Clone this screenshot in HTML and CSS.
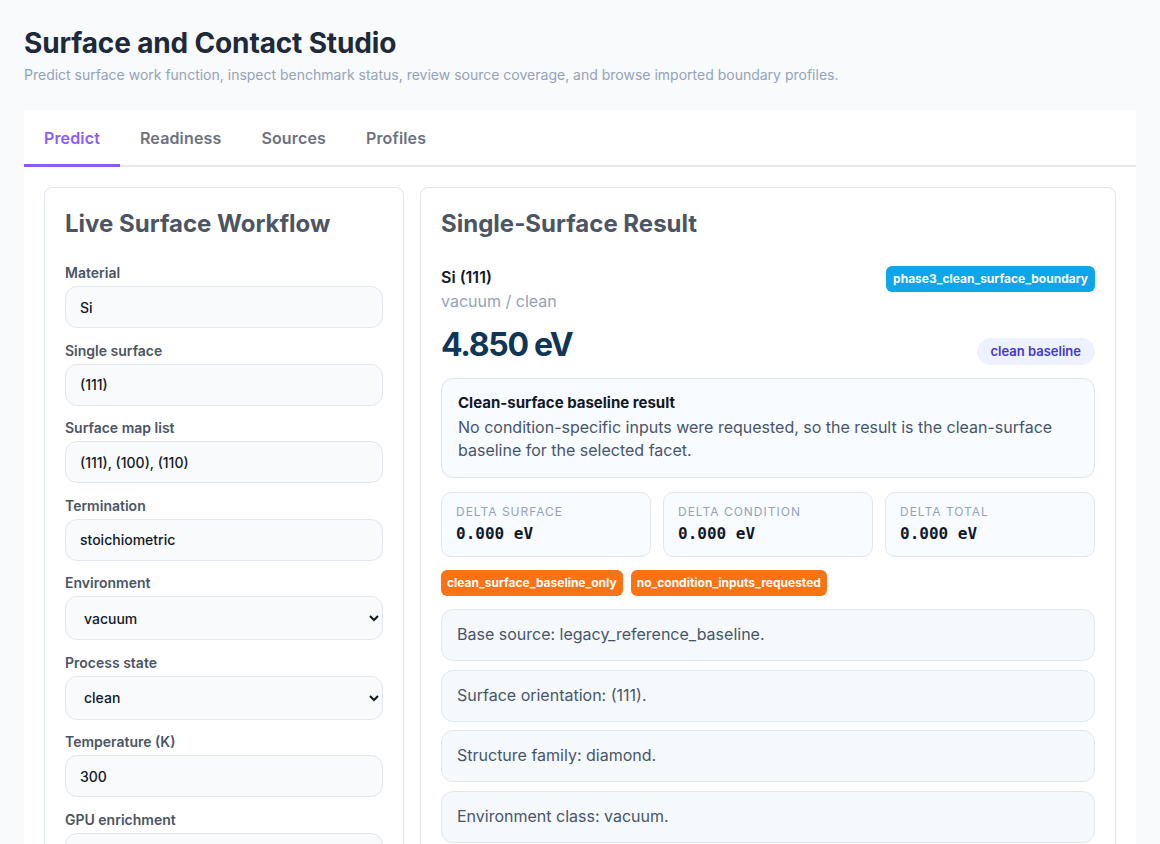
FILE: index.html
```html
<!DOCTYPE html>
<html lang="en">
  <head>
    <meta charset="UTF-8" />
    <meta name="viewport" content="width=device-width, initial-scale=1.0" />
    <title>Surface and Contact Studio</title>
    <link rel="stylesheet" href="styles.css">
  </head>
  <body>
    <header class="page-head">
      <h1>Surface and Contact Studio</h1>
      <p class="lead">Predict surface work function, inspect benchmark status, review source coverage, and browse imported boundary profiles.</p>
    </header>

    <main class="studio">
      <nav class="tabs">
        <button class="tab active">Predict</button>
        <button class="tab">Readiness</button>
        <button class="tab">Sources</button>
        <button class="tab">Profiles</button>
      </nav>

      <section class="panel">
        <form class="card workflow">
          <h2>Live Surface Workflow</h2>
          <div class="fields">
            <div class="field">
              <label for="material">Material</label>
              <input id="material" type="text" value="Si" />
            </div>
            <div class="field">
              <label for="surface">Single surface</label>
              <input id="surface" type="text" value="(111)" />
            </div>
            <div class="field">
              <label for="surface-map">Surface map list</label>
              <input id="surface-map" type="text" value="(111), (100), (110)" />
            </div>
            <div class="field">
              <label for="termination">Termination</label>
              <input id="termination" type="text" value="stoichiometric" />
            </div>
            <div class="field">
              <label for="environment">Environment</label>
              <select id="environment">
                <option selected>vacuum</option>
                <option>air</option>
                <option>oxygen</option>
              </select>
            </div>
            <div class="field">
              <label for="process">Process state</label>
              <select id="process">
                <option selected>clean</option>
                <option>annealed</option>
                <option>oxidized</option>
              </select>
            </div>
            <div class="field">
              <label for="temperature">Temperature (K)</label>
              <input id="temperature" type="text" value="300" />
            </div>
            <div class="field">
              <label for="gpu">GPU enrichment</label>
              <select id="gpu">
                <option selected>off</option>
                <option>on</option>
              </select>
            </div>
          </div>
        </form>

        <div class="card result">
          <h2>Single-Surface Result</h2>

          <div class="result-head">
            <div>
              <div class="facet">Si (111)</div>
              <div class="conditions">vacuum / clean</div>
            </div>
            <span class="badge badge-blue">phase3_clean_surface_boundary</span>
          </div>

          <div class="result-value">
            <div class="value">4.850 eV</div>
            <span class="pill">clean baseline</span>
          </div>

          <div class="notice">
            <strong>Clean-surface baseline result</strong>
            <p>No condition-specific inputs were requested, so the result is the clean-surface baseline for the selected facet.</p>
          </div>

          <div class="deltas">
            <div class="delta">
              <div class="delta-label">Delta surface</div>
              <div class="delta-value">0.000 eV</div>
            </div>
            <div class="delta">
              <div class="delta-label">Delta condition</div>
              <div class="delta-value">0.000 eV</div>
            </div>
            <div class="delta">
              <div class="delta-label">Delta total</div>
              <div class="delta-value">0.000 eV</div>
            </div>
          </div>

          <div class="flags">
            <span class="badge badge-orange">clean_surface_baseline_only</span>
            <span class="badge badge-orange">no_condition_inputs_requested</span>
          </div>

          <ul class="notes">
            <li>Base source: legacy_reference_baseline.</li>
            <li>Surface orientation: (111).</li>
            <li>Structure family: diamond.</li>
            <li>Environment class: vacuum.</li>
            <li>Process state: clean.</li>
          </ul>
        </div>
      </section>
    </main>
  </body>
</html>
```

FILE: styles.css
```css
body {
  margin: 0;
  padding: 26px 24px 0;
  background: #f8fafc;
  font-family: Inter, 'Noto Sans', sans-serif;
  color: #1e293b;
}
.page-head h1 {
  margin: 0;
  font-size: 28px;
  line-height: 34px;
  font-weight: 700;
  letter-spacing: -0.15px;
  color: #1e293b;
}
.lead {
  margin: 5px 0 25px;
  font-size: 14px;
  line-height: 20px;
  color: #94a3b8;
}
.studio {
  background: #fff;
}
.tabs {
  display: flex;
  border-bottom: 2px solid #e5e7eb;
}
.tab {
  padding: 19px 20px 16px;
  margin-bottom: -2px;
  border: none;
  border-bottom: 3px solid transparent;
  background: none;
  font-family: inherit;
  font-size: 16px;
  line-height: 19px;
  font-weight: 600;
  letter-spacing: 0.15px;
  color: #6b7280;
  cursor: pointer;
}
.tab.active {
  color: #8b5cf6;
  border-bottom-color: #8b5cf6;
}
.panel {
  display: grid;
  grid-template-columns: 360px 1fr;
  gap: 16px;
  padding: 20px 20px 0;
  align-items: start;
}
.card {
  background: #fff;
  border: 1px solid #e2e8f0;
  border-radius: 8px;
  padding: 21px 20px 20px;
}
.card h2 {
  margin: 0;
  font-size: 24px;
  line-height: 29px;
  font-weight: 700;
  color: #4b5563;
}
.fields {
  display: flex;
  flex-direction: column;
  gap: 13.5px;
  margin-top: 26px;
}
.field label {
  display: block;
  margin-bottom: 5px;
  font-size: 14px;
  line-height: 17px;
  font-weight: 600;
  color: #4b5563;
}
.field input,
.field select {
  box-sizing: border-box;
  width: 100%;
  height: 42px;
  padding: 0 14px;
  border: 1px solid #e2e8f0;
  border-radius: 12px;
  background: #f8fafc;
  font-family: inherit;
  font-size: 14px;
  font-weight: 500;
  color: #111827;
}
.field select {
  height: 44px;
}
.result-head {
  display: flex;
  justify-content: space-between;
  align-items: flex-start;
  margin-top: 27px;
}
.facet {
  font-size: 16px;
  line-height: 24px;
  font-weight: 600;
  color: #111827;
}
.conditions {
  font-size: 16px;
  line-height: 24px;
  color: #94a3b8;
}
.badge {
  display: inline-block;
  padding: 0 6px;
  border-radius: 6px;
  font-size: 12px;
  line-height: 26px;
  font-weight: 700;
  color: #fff;
  white-space: nowrap;
}
.badge-blue {
  margin-top: 1px;
  padding: 0 7px;
  background: #0ea5e9;
}
.badge-orange {
  background: #f97316;
}
.result-value {
  display: flex;
  justify-content: space-between;
  align-items: flex-end;
  margin-top: 12px;
}
.value {
  font-size: 32px;
  line-height: 40px;
  font-weight: 700;
  letter-spacing: -1.3px;
  color: #0f3557;
}
.pill {
  padding: 0 14px;
  border-radius: 999px;
  background: #eef2ff;
  font-size: 13px;
  line-height: 27px;
  font-weight: 600;
  color: #4338ca;
}
.notice {
  margin-top: 13px;
  padding: 15px 16px;
  border: 1px solid #dbe5f1;
  border-radius: 12px;
  background: #f8fbff;
}
.notice strong {
  display: block;
  font-size: 15px;
  line-height: 18px;
  color: #111827;
}
.notice p {
  margin: 4px 0 0;
  font-size: 16px;
  line-height: 23px;
  color: #475569;
}
.deltas {
  display: grid;
  grid-template-columns: repeat(3, 1fr);
  gap: 12px;
  margin-top: 14px;
}
.delta {
  padding: 12px 14px 13px;
  border: 1px solid #e2e8f0;
  border-radius: 10px;
  background: #f8fbff;
}
.delta-label {
  font-size: 12px;
  line-height: 14px;
  letter-spacing: 1px;
  text-transform: uppercase;
  color: #94a3b8;
}
.delta-value {
  margin-top: 5px;
  font-family: 'DejaVu Sans Mono', monospace;
  font-size: 16px;
  line-height: 19px;
  font-weight: 700;
  color: #111827;
}
.flags {
  display: flex;
  gap: 8px;
  margin-top: 13px;
}
.notes {
  list-style: none;
  margin: 13px 0 0;
  padding: 0;
  display: flex;
  flex-direction: column;
  gap: 8.5px;
}
.notes li {
  padding: 14px 15px 15px;
  border: 1px solid #e2e8f0;
  border-radius: 12px;
  background: #f6f9fc;
  font-size: 16px;
  line-height: 21px;
  color: #475569;
}
```
